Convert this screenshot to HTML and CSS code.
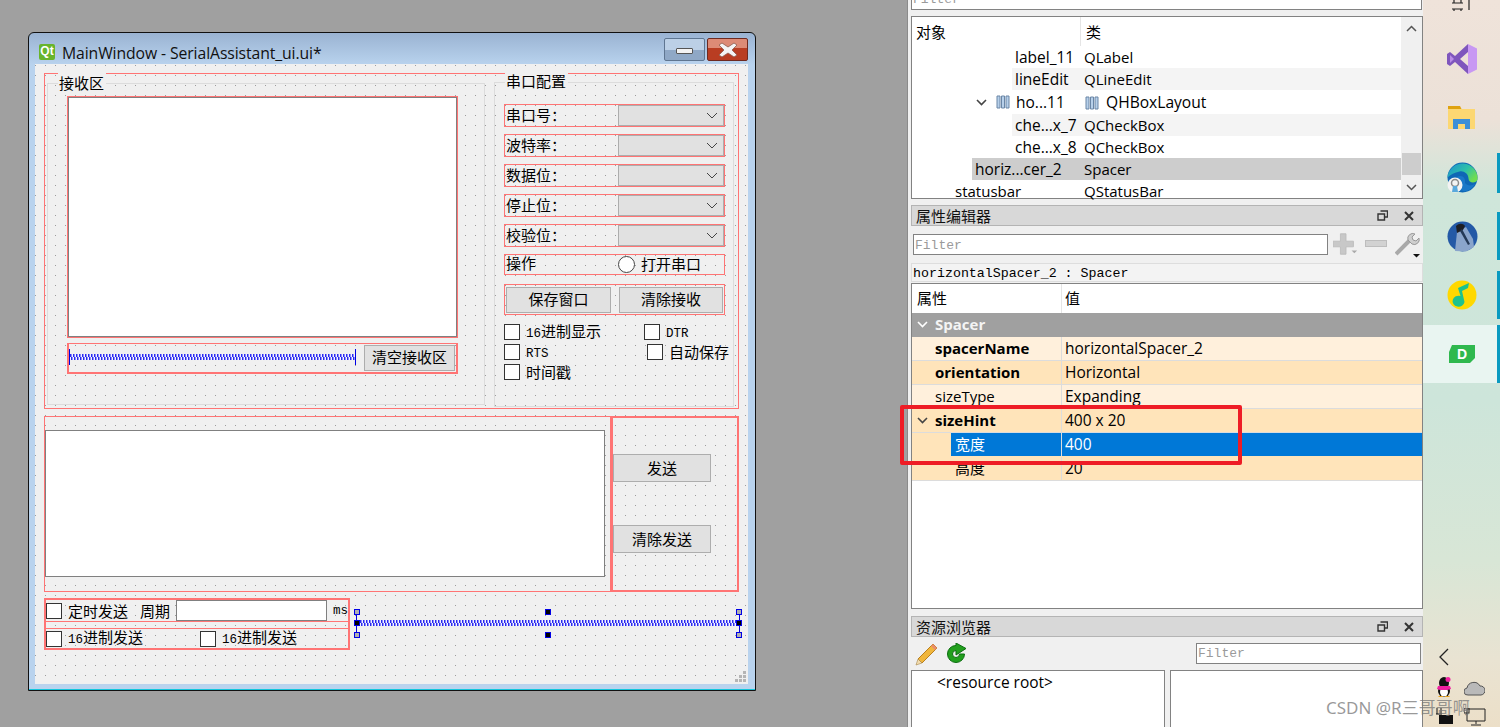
FILE: index.html
```html
<!DOCTYPE html>
<html lang="zh">
<head>
<meta charset="utf-8">
<title>Qt Designer</title>
<link rel="stylesheet" href="styles.css">
</head>
<body>
<main class="desktop">
  <section class="window">
    <header class="titlebar">
      <span class="qt-logo">Qt</span>
      <span class="win-title">MainWindow - SerialAssistant_ui.ui*</span>
      <span class="win-btn win-min"><i></i></span>
      <span class="win-btn win-close">
        <svg width="22" height="16" viewBox="0 0 22 16"><path d="M5 1l6 4 6-4 3 2-5 5 5 5-3 2-6-4-6 4-3-2 5-5-5-5z" fill="#f4f4f4" stroke="#8d5a4c" stroke-width=".8"/></svg>
      </span>
    </header>
    <div class="form">
      <div class="top-layout">
        <div class="group recv-group">
          <span class="group-title">接收区</span>
          <div class="red recv-edit-box"><div class="edit recv-edit"></div></div>
          <div class="red recv-row">
            <div class="spacer recv-spacer"></div>
            <button class="btn recv-clear">清空接收区</button>
          </div>
        </div>
        <div class="group serial-group">
          <span class="group-title">串口配置</span>
          <div class="red s-row"><span class="s-label">串口号：</span><span class="combo"><svg width="12" height="7" viewBox="0 0 12 7"><path d="M1 1l5 5 5-5" fill="none" stroke="#444"/></svg></span></div>
          <div class="red s-row"><span class="s-label">波特率：</span><span class="combo"><svg width="12" height="7" viewBox="0 0 12 7"><path d="M1 1l5 5 5-5" fill="none" stroke="#444"/></svg></span></div>
          <div class="red s-row"><span class="s-label">数据位：</span><span class="combo"><svg width="12" height="7" viewBox="0 0 12 7"><path d="M1 1l5 5 5-5" fill="none" stroke="#444"/></svg></span></div>
          <div class="red s-row"><span class="s-label">停止位：</span><span class="combo"><svg width="12" height="7" viewBox="0 0 12 7"><path d="M1 1l5 5 5-5" fill="none" stroke="#444"/></svg></span></div>
          <div class="red s-row"><span class="s-label">校验位：</span><span class="combo"><svg width="12" height="7" viewBox="0 0 12 7"><path d="M1 1l5 5 5-5" fill="none" stroke="#444"/></svg></span></div>
          <div class="red s-row op-row"><span class="s-label">操作</span><span class="radio"></span><span class="radio-text">打开串口</span></div>
          <div class="red btn-row"><button class="btn save-btn">保存窗口</button><button class="btn clear-btn">清除接收</button></div>
          <div class="checks">
            <div class="chk-row"><span class="chk-item w140"><i class="box"></i><span class="t"><b class="mn">16</b>进制显示</span></span><span class="chk-item"><i class="box"></i><span class="t"><b class="mn">DTR</b></span></span></div>
            <div class="chk-row"><span class="chk-item w143"><i class="box"></i><span class="t"><b class="mn">RTS</b></span></span><span class="chk-item"><i class="box"></i><span class="t">自动保存</span></span></div>
            <div class="chk-row"><span class="chk-item"><i class="box"></i><span class="t">时间戳</span></span></div>
          </div>
        </div>
      </div>
      <div class="mid-layout">
        <div class="mid-left"><div class="edit send-edit"></div></div>
        <div class="mid-right">
          <button class="btn send-btn">发送</button>
          <button class="btn send-btn second">清除发送</button>
        </div>
      </div>
      <div class="bot-layout">
        <div class="red-thick bot-box">
          <div class="red bot-row1">
            <span class="chk-item"><i class="box"></i><span class="t">定时发送</span></span>
            <span class="period">周期</span>
            <span class="edit period-edit"></span>
            <b class="mn ms">ms</b>
          </div>
          <div class="red bot-row2">
            <span class="chk-item w154"><i class="box"></i><span class="t"><b class="mn">16</b>进制发送</span></span>
            <span class="chk-item"><i class="box"></i><span class="t"><b class="mn">16</b>进制发送</span></span>
          </div>
        </div>
        <div class="sel-spacer">
          <div class="spacer"></div>
          <i class="h tl"></i><i class="h tm"></i><i class="h tr"></i>
          <i class="h ml"></i><i class="h mr"></i>
          <i class="h bl"></i><i class="h bm"></i><i class="h br"></i>
        </div>
      </div>
      <svg class="grip" width="11" height="11" viewBox="0 0 11 11"><path d="M8 0h3v3H8zM4 4h3v3H4zM8 4h3v3H8zM0 8h3v3H0zM4 8h3v3H4zM8 8h3v3H8z" fill="#b5b5b5"/></svg>
    </div>
  </section>
</main>

<aside class="panel">
  <div class="p-input top-filter">Filter</div>
  <div class="tree">
    <div class="t-head"><span class="t-h1">对象</span><span class="t-h2">类</span></div>
    <div class="t-body">
      <div class="t-row d3"><span class="n">label_11</span><span class="c">QLabel</span></div>
      <div class="t-row d3 alt"><span class="n">lineEdit</span><span class="c">QLineEdit</span></div>
      <div class="t-row d2h">
        <span class="n">
          <svg class="tw" width="11" height="7" viewBox="0 0 11 7"><path d="M1 1l4.500 4.500L10 1" fill="none" stroke="#444" stroke-width="1.600"/></svg>
          <svg class="hbox" width="14" height="14" viewBox="0 0 14 14"><path d="M1 1h3v12H1zM5.500 1h3v12h-3zM10 1h3v12h-3z" fill="#b7d0ea" stroke="#6a86a6"/></svg><span class="ht">ho...11</span>
        </span>
        <span class="c"><svg class="hbox2" width="14" height="14" viewBox="0 0 14 14"><path d="M1 1h3v12H1zM5.500 1h3v12h-3zM10 1h3v12h-3z" fill="#b7d0ea" stroke="#6a86a6"/></svg>QHBoxLayout</span>
      </div>
      <div class="t-row d3 alt"><span class="n">che...x_7</span><span class="c">QCheckBox</span></div>
      <div class="t-row d3"><span class="n">che...x_8</span><span class="c">QCheckBox</span></div>
      <div class="t-row d2 sel"><span class="n">horiz...cer_2</span><span class="c">Spacer</span></div>
      <div class="t-row d1"><span class="n">statusbar</span><span class="c">QStatusBar</span></div>
    </div>
    <div class="scrollbar">
      <svg class="sb-up" width="11" height="7" viewBox="0 0 11 7"><path d="M1 6l4.500-4.500L10 6" fill="none" stroke="#555" stroke-width="1.500"/></svg>
      <span class="sb-thumb"></span>
      <svg class="sb-down" width="11" height="7" viewBox="0 0 11 7"><path d="M1 1l4.500 4.500L10 1" fill="none" stroke="#555" stroke-width="1.500"/></svg>
    </div>
  </div>

  <div class="dock-title prop-title"><span>属性编辑器</span>
    <svg class="d-float" width="11" height="11" viewBox="0 0 11 11"><path d="M3.500 1h7v6h-3M1 4h6.500v6H1z" fill="none" stroke="#333" stroke-width="1.400"/></svg>
    <svg class="d-close" width="10" height="10" viewBox="0 0 10 10"><path d="M1 1l8 8M9 1l-8 8" stroke="#333" stroke-width="2"/></svg>
  </div>
  <div class="prop-tools">
    <div class="p-input prop-filter">Filter</div>
    <svg class="plus" width="28" height="24" viewBox="0 0 28 24"><path d="M8 1h6v8h8v6h-8v8H8v-8H0V9h8z" fill="#c8c8c8" stroke="#bdbdbd"/><path d="M20 19h6l-3 3z" fill="#aaa"/></svg>
    <svg class="minus" width="22" height="8" viewBox="0 0 22 8"><rect x=".5" y=".5" width="21" height="6" fill="#d2d2d2" stroke="#bdbdbd"/></svg>
    <svg class="wrench" width="26" height="26" viewBox="0 0 26 26"><path d="M1 22L15 8" stroke="#a9a9a9" stroke-width="4"/><path d="M13 8a5 5 0 0 1 7-6l-3 3 1 3 3 1 3-3a5 5 0 0 1-7 6z" fill="#cfcfcf" stroke="#999"/><path d="M18 22h7l-3.500 3.500z" fill="#111"/></svg>
  </div>
  <div class="obj-line">horizontalSpacer_2 : Spacer</div>
  <div class="prop-table">
    <div class="pt-head"><span class="pt-h1">属性</span><span class="pt-h2">值</span></div>
    <div class="pt-row sec"><span class="pt-n"><svg class="pt-tw" width="11" height="7" viewBox="0 0 11 7"><path d="M1 1l4.500 4.500L10 1" fill="none" stroke="#fff" stroke-width="1.600"/></svg>Spacer</span></div>
    <div class="pt-row l bold"><span class="pt-n">spacerName</span><span class="pt-v">horizontalSpacer_2</span></div>
    <div class="pt-row k bold"><span class="pt-n">orientation</span><span class="pt-v">Horizontal</span></div>
    <div class="pt-row l"><span class="pt-n">sizeType</span><span class="pt-v">Expanding</span></div>
    <div class="pt-row k bold"><span class="pt-n"><svg class="pt-tw" width="11" height="7" viewBox="0 0 11 7"><path d="M1 1l4.500 4.500L10 1" fill="none" stroke="#444" stroke-width="1.600"/></svg>sizeHint</span><span class="pt-v">400 x 20</span></div>
    <div class="pt-row k sub selected"><span class="pt-n">宽度</span><span class="pt-v">400</span></div>
    <div class="pt-row k sub"><span class="pt-n">高度</span><span class="pt-v">20</span></div>
  </div>

  <div class="dock-title res-title"><span>资源浏览器</span>
    <svg class="d-float" width="11" height="11" viewBox="0 0 11 11"><path d="M3.500 1h7v6h-3M1 4h6.500v6H1z" fill="none" stroke="#333" stroke-width="1.400"/></svg>
    <svg class="d-close" width="10" height="10" viewBox="0 0 10 10"><path d="M1 1l8 8M9 1l-8 8" stroke="#333" stroke-width="2"/></svg>
  </div>
  <div class="res-tools">
    <svg width="24" height="24" viewBox="0 0 24 24"><path d="M18 2l4 4L7 21l-4-4z" fill="#f0b63c" stroke="#b97f1e"/><path d="M18 2l4 4-2 2-4-4z" fill="#e98d6c"/><path d="M3 17l4 4-6 2z" fill="#f2dcae" stroke="#a5854a" stroke-width=".6"/></svg>
    <svg class="refresh" width="22" height="22" viewBox="0 0 22 22"><path d="M11 2.500a8.500 8.500 0 1 0 8.500 8.500h-5a3.500 3.500 0 1 1-3.500-3.500V12l10-6.500L11 0z" fill="#22a01d" stroke="#0c6d10" stroke-width="1"/></svg>
    <div class="p-input res-filter">Filter</div>
  </div>
  <div class="res-panes">
    <div class="res-pane left"><span>&lt;resource root&gt;</span></div>
    <div class="res-pane right"></div>
  </div>
</aside>

<nav class="taskbar">
  <svg class="tb-top" width="20" height="11" viewBox="0 0 20 11"><path d="M1 3h11M1 9h11M3 0v3M10 0v3M3 9v2M10 9v2M18 0v10" fill="none" stroke="#222" stroke-width="1.200"/></svg>
  <div class="tb-item vs">
    <svg width="30" height="30" viewBox="0 0 30 30"><path d="M21 0l9 4.500v21L21 30z" fill="#c898f3"/><path d="M21 0L8 12 3 8 0 10v10l3 2 5-4 13 12v-8l-8-7 8-7z" fill="#7f56bd"/><path d="M3 11l4 4-4 4z" fill="#b98be8"/></svg>
  </div>
  <div class="tb-item folder">
    <svg width="28" height="27" viewBox="0 0 28 27"><path d="M0 0h12l2 4H0z" fill="#dfa210"/><path d="M0 3h27v20H0z" fill="#fcd772"/><path d="M5 13h17v10h-5v-5h-7v5H5z" fill="#3c8fd8"/></svg>
  </div>
  <div class="tb-item edge on">
    <svg width="31" height="31" viewBox="0 0 31 31"><defs><linearGradient id="eg" x1="0" y1="0" x2="1" y2=".6"><stop offset="0" stop-color="#1a8fd1"/><stop offset=".6" stop-color="#2ec1a8"/><stop offset="1" stop-color="#6fdc52"/></linearGradient></defs><circle cx="15.500" cy="15.500" r="15" fill="#0f67b5"/><path d="M.5 15.500a15 15 0 0 1 30 2c-1 4-9 4-9-1 0-5-5-8-9-7-5 1-9 3-12 6z" fill="url(#eg)"/><path d="M10 15c5-3 9 1 8 6 2 3 7 3 10 1-3 5-8 8-12 7-6-1-9-8-6-14z" fill="#1a78c8"/><circle cx="8" cy="23" r="7.500" fill="#f3f3f3"/><circle cx="8" cy="21" r="3.500" fill="none" stroke="#8a8a8a" stroke-width="1.500"/><path d="M6 24h4l1 6H5z" fill="#5aa9dc"/></svg>
  </div>
  <div class="tb-item avatar on">
    <svg width="31" height="31" viewBox="0 0 31 31"><circle cx="15.500" cy="15.500" r="15" fill="#2359a6"/><path d="M8 30l2-19 9-5 7 12 1 8-8 4.500z" fill="#8aa5cb"/><path d="M9 5c3-3 7-3 9 0l-2 4-6 3z" fill="#1d1e24"/><path d="M15 8l8 15-2 1L13 10z" fill="#253a57"/></svg>
  </div>
  <div class="tb-item qqm on">
    <svg width="30" height="30" viewBox="0 0 30 30"><circle cx="15" cy="15" r="14.500" fill="#ffd800"/><path d="M11 8l11-5-1 5-6 3 2.500 11a6 5.500 0 1 1-4-6z" fill="#1ec28d"/></svg>
  </div>
  <div class="tb-item d-app on active">
    <span class="d-badge">D</span>
  </div>
  <svg class="tb-chev" width="12" height="18" viewBox="0 0 12 18"><path d="M10 1L2 9l8 8" fill="none" stroke="#222" stroke-width="1.300"/></svg>
  <div class="tray tray1">
    <svg width="18" height="21" viewBox="0 0 18 21"><ellipse cx="9" cy="6" rx="5" ry="6" fill="#111"/><ellipse cx="9" cy="14" rx="6" ry="6" fill="#111"/><ellipse cx="9" cy="15" rx="4" ry="4.500" fill="#fff"/><path d="M3 9h12l1 3-4 1H5l-3-1z" fill="#f01fa0"/><circle cx="13" cy="2.500" r="2.500" fill="#f01fa0"/><path d="M3 20h5v-1H4zM10 20h5l-1-1h-4z" fill="#e9a21b"/></svg>
    <svg width="21" height="16" viewBox="0 0 21 16"><path d="M4 15a3.500 3.500 0 0 1-1-7 7 7 0 0 1 13-2 4.500 4.500 0 0 1 1 9z" fill="#b9b9b9" stroke="#555" stroke-width="1"/></svg>
  </div>
  <div class="tray tray2">
    <svg width="18" height="18" viewBox="0 0 18 18"><path d="M2 0v6M6 0v6M1 6h6" stroke="#111" fill="none"/><rect x="4" y="7" width="14" height="9" fill="#111"/></svg>
    <svg width="22" height="18" viewBox="0 0 22 18"><path d="M3 1h18v12H3zM12 13v3M7 17h10" fill="none" stroke="#222"/><rect x="0" y="0" width="5" height="5" fill="none" stroke="#222"/></svg>
  </div>
</nav>
<div class="watermark">CSDN @R三哥哥啊</div>
<div class="callout"></div>
</body>
</html>
```

FILE: styles.css
```css
* { box-sizing: border-box; }
html, body { margin: 0; padding: 0; height: 727px; overflow: hidden; }
body {
  display: flex;
  width: 1500px;
  font-family: "Noto Sans CJK SC", sans-serif;
  color: #000;
  background: #a0a0a0;
  position: relative;
}
i, b { font-style: normal; font-weight: normal; }

/* desktop and designer window */
.desktop { width: 907px; height: 727px; background: #a0a0a0; position: relative; flex: none; }
.window {
  position: absolute; left: 28px; top: 32px; width: 728px; height: 659px;
  background: linear-gradient(#9ab3d2 0, #b9d3ee 32px, #b9d3ee 100%);
  border: 1px solid #111;
  border-radius: 6px 6px 0 0;
  box-shadow: inset 0 -1px 0 #12c6dc;
  padding: 0 7px 6px 6px;
  display: flex; flex-direction: column;
}
.titlebar { height: 31px; display: flex; align-items: flex-start; flex: none; }
.qt-logo {
  width: 16px; height: 16px; margin: 11px 0 0 4px; background: #68b42c; color: #fff;
  font: bold 12px/15px "Liberation Sans", sans-serif; text-align: center; border-radius: 2px; flex: none;
}
.win-title { margin: 10px 0 0 7px; font: 15.750px/20px "Open Sans", sans-serif; color: #111; flex: 1; white-space: nowrap; letter-spacing: -.1px; }
.win-btn { display: flex; align-items: center; justify-content: center; height: 23px; margin-top: 5px; border-radius: 2px; flex: none; }
.win-min { width: 41px; border: 1px solid #5f7691; background: linear-gradient(#bcd0e6 50%, #8fa8c6 50%); }
.win-min i { width: 17px; height: 6px; background: #f3f3f3; border: 1px solid #555; border-radius: 1px; margin-top: 2px; }
.win-close { width: 41px; margin-left: 2px; border: 1px solid #6e2a20; background: linear-gradient(#dd8b76 45%, #b93d22 45%); }

.form {
  flex: 1; position: relative; padding: 9px 0 0 9px;
  background-color: #f0f0f0;
  background-image: radial-gradient(circle at .5px .5px, #9c9c9c .7px, transparent .7px);
  background-size: 10px 10px;
  background-position: 0 1px;
  font-size: 15px; line-height: 20px;
}
.mn { font-family: "Liberation Mono", monospace; font-size: 12.500px; }
.red { border: 1px solid #ff7474; }
.red-thick { border: 2px solid #ff7474; }

.top-layout { width: 695px; height: 336px; border: 1px solid #ff7474; display: flex; align-items: flex-start; flex: none; }
.group { border: 1px solid #dcdcdc; position: relative; }
.group-title { position: absolute; top: -11px; left: 10px; background: #f0f0f0; padding: 0 2px 0 1px; line-height: 20px; }
.recv-group { width: 438px; height: 322px; margin: 9px 0 0 2px; padding: 12px 0 0 19px; }
.serial-group .group-title { top: -12px; }
.recv-edit-box { width: 391px; height: 242px; }
.edit { background: #fff; border: 1px solid #808080; display: block; }
.recv-edit { height: 240px; }
.recv-row { width: 391px; height: 31px; margin-top: 5px; border-width: 1px 2px 2px 2px; display: flex; align-items: flex-start; }
.spacer {
  height: 16px; flex: none;
  border-left: 1px solid #0000e6; border-right: 1px solid #0000e6;
  background:
    repeating-linear-gradient(90deg, #2a2af0 0 1px, #8c8cf8 1px 2px, #f4f4ff 2px 3px) 0 5px / 100% 3px no-repeat,
    repeating-linear-gradient(90deg, #f4f4ff 0 1px, #2a2af0 1px 2px, #8c8cf8 2px 3px) 0 8px / 100% 3px no-repeat;
}
.recv-spacer { width: 287px; margin: 5px 0 0 0; }
.btn { background: #e1e1e1; border: 1px solid #adadad; font: 15px/20px "Noto Sans CJK SC", sans-serif; color: #000; padding: 0 0 2px; display: block; }
.recv-clear { width: 91px; height: 26px; margin: 1px 0 0 8px; }

.serial-group { width: 240px; height: 325px; margin: 8px 0 0 9px; padding: 21px 0 0 9px; }
.s-row { width: 221px; height: 23px; margin-bottom: 7px; display: flex; align-items: center; }
.s-label { width: 113px; padding: 0 0 2px 1px; flex: none; }
.combo { width: 106px; height: 21px; background: #e1e1e1; border: 1px solid #adadad; display: flex; align-items: center; justify-content: flex-end; padding-right: 5px; }
.op-row { height: 21px; margin-bottom: 9px; }
.op-row .s-label { padding-bottom: 3px; }
.radio { width: 17px; height: 17px; border: 1.500px solid #444; border-radius: 50%; background: #fff; flex: none; }
.radio-text { margin-left: 6px; padding-bottom: 1px; }
.btn-row { width: 221px; height: 31px; display: flex; align-items: center; padding-left: 1px; }
.save-btn { width: 105px; height: 26px; }
.clear-btn { width: 104px; height: 26px; margin-left: 8px; }
.checks { margin-top: 9px; }
.chk-row { display: flex; height: 20px; align-items: flex-start; }
.chk-item { display: flex; align-items: center; height: 16px; flex: none; }
.w140 { width: 140px; } .w143 { width: 143px; } .w154 { width: 154px; }
.box { width: 16px; height: 16px; background: #fff; border: 1.500px solid #333; flex: none; }
.t { margin-left: 6px; white-space: nowrap; }

.mid-layout { display: flex; width: 695px; height: 176px; margin-top: 7px; flex: none; }
.mid-left { width: 567px; border: 1px solid #ff7474; padding: 13px 0 0 0; }
.send-edit { width: 560px; height: 147px; }
.mid-right { width: 128px; border: 2px solid #ff7474; padding: 36px 0 0 0; }
.send-btn { width: 98px; height: 28px; padding-bottom: 0; }
.send-btn.second { margin-top: 43px; }

.bot-layout { display: flex; margin-top: 6px; }
.bot-box { width: 306px; height: 52px; }
.bot-row1 { height: 22px; border-width: 0 0 1px 0; display: flex; align-items: center; margin-bottom: 6px; }
.period { margin-left: 12px; white-space: nowrap; }
.period-edit { width: 151px; height: 21px; margin-left: 6px; }
.ms { margin-left: 6px; }
.bot-row2 { height: 20px; border-width: 1px 0 0 0; display: flex; align-items: center; }
.sel-spacer { width: 384px; height: 23px; margin: 14px 0 0 6px; position: relative; }
.sel-spacer .spacer { width: 384px; height: 23px; background-position: 0 8px, 0 11px; }
.h { position: absolute; width: 6px; height: 6px; background: #b0b0b0; border: 1px solid #0000e6; }
.tl, .ml, .bl { left: -2px; } .tm, .bm { left: 189px; background: #000; } .tr, .mr, .br { right: -2px; }
.tl, .tm, .tr { top: -3px; } .ml, .mr { top: 8px; background: #000; } .bl, .bm, .br { bottom: -3px; }
.grip { position: absolute; right: 2px; bottom: 2px; }

/* right dock panel */
.panel { width: 516px; height: 727px; background: #f0f0f0; border-left: 1px solid #8a8a8a; padding-left: 3px; flex: none; font: 15px/22px "Open Sans", "Noto Sans CJK SC", sans-serif; }
.p-input { background: #fff; border: 1px solid #828282; font: 13px/18px "Liberation Mono", monospace; color: #9a9a9a; padding-left: 1px; }
.top-filter { width: 511px; height: 20px; margin-top: -10px; }
.tree { width: 512px; height: 183px; margin-top: 6px; background: #fff; border: 1px solid #828282; position: relative; }
.t-head { height: 29px; display: flex; font-family: "Noto Sans CJK SC", sans-serif; line-height: 29px; width: 490px; }
.t-h1 { width: 169px; padding-left: 4px; border-right: 1px solid #e5e5e5; }
.t-h2 { padding-left: 5px; }
.t-row { height: 22px; display: flex; width: 489px; white-space: nowrap; }
.t-row .c { padding-left: 4px; flex: 1; }
.t-row .n { flex: none; font-size: 15.500px; }
.d3 { margin-left: 100px; } .d3 .n { width: 68px; padding-left: 3px; }
.d2 { margin-left: 60px; } .d2 .n { width: 108px; padding-left: 3px; }
.d1 { margin-left: 0; } .t-row.d1 .n { width: 168px; padding-left: 43px; font-size: 15px; }
.d2h { margin-left: 0; height: 24px; line-height: 24px; } .d2h .n { width: 168px; padding-left: 64px; display: flex; align-items: center; }
.d2h .c { font-size: 15.600px; }
.t-row.d3, .t-row.d2 { width: auto; margin-right: 21px; }
.tw { margin-right: 9px; }
.hbox { margin-right: 6px; }
.hbox2 { margin: 0 7px 0 1px; vertical-align: -2px; }
.alt { background: #f4f4f4; }
.sel { background: #cdcdcd; }
.scrollbar { position: absolute; right: 0; top: 0; width: 21px; height: 181px; background: #f0f0f0; display: flex; flex-direction: column; align-items: center; }
.sb-up { margin-top: 8px; }
.sb-thumb { width: 19px; height: 22px; background: #cdcdcd; margin-top: 121px; }
.sb-down { margin-top: 9px; }

.dock-title { width: 512px; height: 21px; background: #d8d8d8; border: 1px solid #b4b4b4; display: flex; align-items: center; padding-left: 4px; font-family: "Noto Sans CJK SC", sans-serif; line-height: 20px; color: #111; }
.dock-title span { flex: 1; }
.d-close { margin: 0 8px 0 16px; }
.prop-title { margin-top: 6px; }
.prop-tools { height: 37px; display: flex; align-items: flex-start; width: 511px; }
.prop-filter { width: 415px; height: 21px; margin: 8px 0 0 2px; line-height: 21px; }
.plus { margin: 6px 0 0 5px; width: 26px; }
.minus { margin: 14px 0 0 6px; }
.wrench { margin: 6px 0 0 8px; }
.obj-line { width: 512px; height: 19px; font: 13.300px/19px "Liberation Mono", monospace; padding-left: 1px; background: #f3f3f3; border: 1px solid #ddd; white-space: nowrap; }
.prop-table { width: 512px; height: 326px; margin-top: 1px; background: #fff; border: 1px solid #828282; }
.pt-head { height: 29px; display: flex; font-family: "Noto Sans CJK SC", sans-serif; line-height: 28px; }
.pt-h1 { width: 150px; padding-left: 5px; border-right: 1px solid #e5e5e5; }
.pt-h2 { padding-left: 3px; }
.pt-row { height: 24px; display: flex; line-height: 23px; border-bottom: 1px solid #dcdcdc; white-space: nowrap; }
.pt-n { width: 150px; padding-left: 23px; border-right: 1px solid #dcdcdc; position: relative; flex: none; }
.pt-v { padding-left: 3px; flex: 1; font-size: 15.500px; }
.pt-tw { position: absolute; left: 5px; top: 8px; }
.sec { background: #a0a0a0; color: #f4f4f4; font-weight: 700; border-bottom: 0; line-height: 22px; }
.sec .pt-n { border-right: 0; }
.l { background: #fff0dc; }
.k { background: #ffe4ba; }
.bold .pt-n { font-weight: 700; }
.sub { line-height: 22px; }
.sub .pt-n { padding-left: 43px; font-family: "Noto Sans CJK SC", sans-serif; }
.selected { color: #fff; background: linear-gradient(90deg, #ffe4ba 39px, #0078d7 39px); border-bottom-color: #ffe4ba; }

.res-title { margin-top: 7px; }
.res-tools { width: 512px; height: 33px; display: flex; align-items: center; padding-left: 4px; }
.refresh { margin-left: 6px; }
.res-filter { width: 225px; height: 21px; margin-left: auto; margin-right: 2px; line-height: 20px; }
.res-panes { display: flex; gap: 5px; width: 512px; height: 60px; }
.res-pane { background: #fff; border: 1px solid #828282; flex: none; font-size: 15.500px; }
.res-pane.left { width: 254px; padding-left: 25px; }
.res-pane.right { width: 253px; }

/* taskbar */
.taskbar {
  width: 77px; height: 727px; flex: none; position: relative;
  background: linear-gradient(#efe3da 0, #ece1d8 120px, #cfe6da 190px, #cde5da 400px, #d8e6d6 560px, #e9e3d2 660px, #ecdfc8 727px);
  display: flex; flex-direction: column; align-items: center;
}
.tb-top { position: absolute; left: 28px; top: 0; }
.tb-item { width: 77px; position: absolute; left: 0; display: flex; align-items: center; justify-content: center; }
.tb-item svg { margin-left: 1px; }
.tb-item.on::after { content: ""; position: absolute; right: 0; top: 0; bottom: 0; width: 3px; background: #0a9ac0; }
.vs { top: 44px; height: 30px; }
.folder { top: 106px; height: 27px; }
.edge { top: 153px; height: 40px; } .edge svg { margin-top: 8px; }
.avatar { top: 212px; height: 48px; }
.qqm { top: 271px; height: 48px; }
.d-app { top: 325px; height: 58px; }
.active { background: #e9f5f1; }
.d-badge {
  width: 26px; height: 18px; margin-left: 1px; background: #2fb84e; color: #fff;
  font: bold 14px/18px "Liberation Sans", sans-serif; text-align: center;
  clip-path: polygon(3px 0, 100% 0, 100% 13px, 21px 100%, 0 100%, 0 7px);
}
.tb-chev { position: absolute; left: 15px; top: 648px; }
.tray { position: absolute; left: 12px; display: flex; align-items: center; gap: 11px; }
.tray1 { top: 677px; }
.tray2 { top: 708px; }
.watermark { position: absolute; left: 1326px; top: 696px; font: 17px/24px "Noto Sans", "Noto Sans CJK SC", sans-serif; color: rgba(120,120,120,.75); white-space: nowrap; }
.callout { position: absolute; left: 900px; top: 405px; width: 342px; height: 60px; border: 4px solid #ee1c25; border-radius: 2px; }
```
